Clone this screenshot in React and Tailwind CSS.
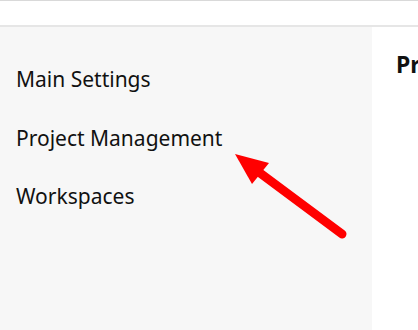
export default function App() {
  return (
    <div className="relative w-[418px] h-[330px] overflow-hidden bg-white" style={{ fontFamily: '"Noto Sans", "Open Sans", sans-serif' }}>
      <div className="h-[27px] border-t border-t-[#d9d9d9] border-b-2 border-b-[#e6e6e6] bg-white" />
      <div className="flex h-[303px]">
        <nav className="w-[372px] shrink-0 bg-[#f7f7f7] pl-4 pt-[38px] flex flex-col gap-[29.5px] text-[21px] leading-[29px] text-[#111]">
          <div>Main Settings</div>
          <div>Project Management</div>
          <div>Workspaces</div>
        </nav>
        <main className="flex-1 pl-6 pt-[22px] whitespace-nowrap">
          <h2 className="text-[23px] leading-[31px] font-bold text-[#111]">Project Management</h2>
        </main>
      </div>
      <svg className="absolute left-0 top-0 pointer-events-none" width="418" height="330" viewBox="0 0 418 330">
        <line x1="342" y1="234" x2="260" y2="173" stroke="#ff0000" strokeWidth="9" strokeLinecap="round" />
        <polygon points="235,154 269,163 252,184" fill="#ff0000" />
      </svg>
    </div>
  );
}
